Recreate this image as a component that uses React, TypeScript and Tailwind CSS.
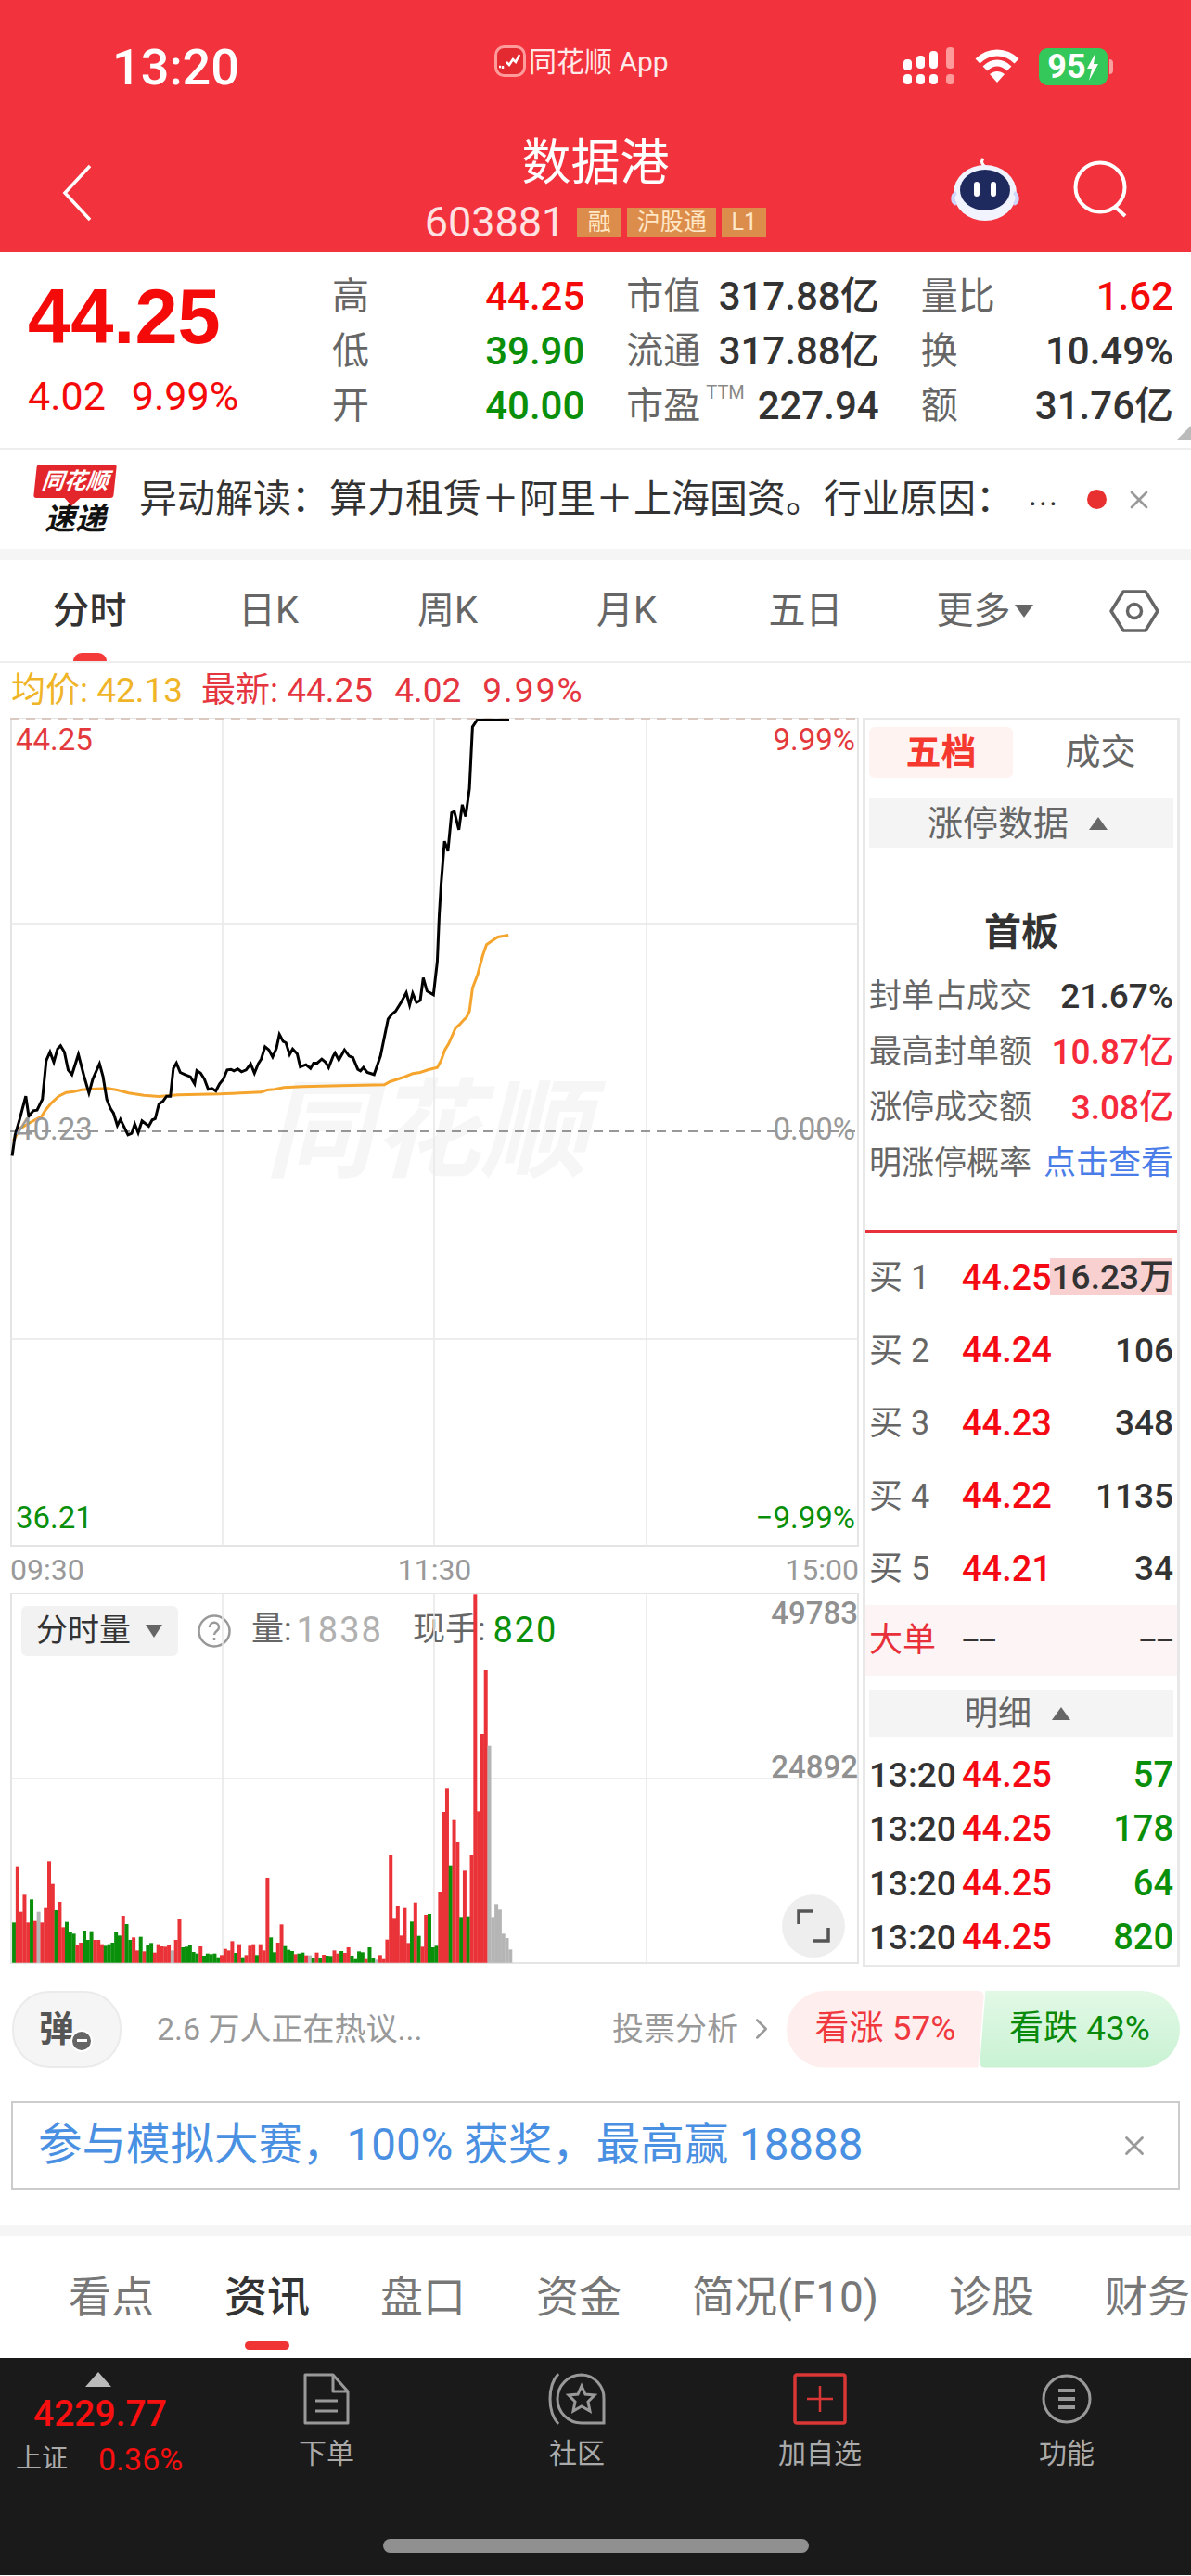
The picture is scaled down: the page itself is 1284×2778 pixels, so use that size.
import { ChevronRight, X } from "lucide-react"

// traced from the reference, in zoomed crop coordinates (2.45x wide, 3x tall)
const priceLine = "32,1458 40,1390 52,1340 68,1265 76,1330 88,1312 98,1310 112,1275 122,1150 132,1122 142,1155 152,1112 160,1102 170,1122 180,1180 190,1195 207,1130 222,1200 235,1255 245,1210 263,1160 272,1200 282,1275 292,1305 300,1320 310,1360 318,1340 338,1390 348,1385 356,1355 365,1383 375,1345 393,1362 402,1342 410,1338 420,1290 430,1282 440,1265 450,1265 458,1175 466,1158 476,1188 490,1196 503,1202 514,1225 520,1182 530,1190 540,1210 550,1243 560,1240 570,1248 580,1225 590,1210 600,1180 610,1178 618,1183 628,1177 638,1186 650,1180 662,1160 672,1190 682,1160 690,1145 700,1105 710,1115 720,1138 730,1110 738,1065 748,1088 755,1092 765,1130 773,1112 785,1128 793,1170 808,1163 820,1175 828,1158 838,1158 850,1145 860,1155 868,1172 880,1135 885,1125 895,1148 910,1115 922,1135 932,1140 945,1178 952,1183 960,1172 970,1188 988,1195 1005,1135 1025,1015 1035,1000 1045,990 1060,960 1073,930 1082,970 1090,932 1100,962 1110,955 1118,882 1128,925 1145,937 1155,830 1160,680 1165,580 1174,440 1183,472 1193,348 1200,344 1212,403 1221,322 1230,360 1240,270 1248,70 1260,48 1345,48"
const avgLine = "35,1410 52,1370 80,1350 110,1330 120,1310 135,1288 155,1265 175,1253 195,1250 215,1244 240,1242 285,1240 310,1245 340,1255 380,1262 420,1266 470,1261 580,1258 690,1252 705,1245 725,1243 750,1237 800,1234 900,1231 1015,1228 1030,1218 1065,1204 1090,1192 1110,1188 1130,1180 1155,1172 1165,1150 1175,1115 1185,1095 1203,1045 1215,1032 1225,1018 1232,1010 1240,990 1248,915 1262,870 1275,810 1285,775 1300,762 1315,750 1343,744"
const volBars = "g1240 r1058 r1205 r1150 r1240 g1165 r1235 y1205 r1240 r1193 r1042 r1115 g1200 r1173 r1255 g1238 g1272 g1276 r1312 r1305 g1266 g1296 g1268 r1296 r1296 r1310 g1315 g1310 g1305 g1270 g1282 r1218 g1245 g1296 r1288 r1330 g1286 r1333 g1312 g1306 r1337 r1310 r1317 r1318 r1313 y1330 r1296 r1230 g1320 g1318 g1312 g1335 g1340 r1317 g1347 g1340 g1342 g1340 g1352 r1345 r1325 r1330 r1300 g1338 r1310 g1352 r1345 r1315 r1310 g1345 r1310 r1330 r1095 g1288 g1336 r1305 r1246 g1316 g1328 g1332 r1342 g1340 g1337 r1346 y1346 g1355 r1337 g1355 r1344 g1347 g1348 r1330 r1340 g1332 r1338 r1320 g1347 g1358 g1333 g1336 r1358 g1320 g1353 y1360 r1345 r1358 r1295 r1022 r1225 r1188 r1282 r1193 r1306 g1237 r1175 g1283 r1318 r1215 g1212 g1320 g1315 r1140 r882 r805 g1055 r908 r978 g1222 r1072 g1220 r1020 r178 r880 r630 r423 y668 y1222 y1180 y1198 y1276 y1290 y1327".split(" ")
const barColor: Record<string, string> = { r: "#ea3338", g: "#0a8f0a", y: "#b5b5b5" }

const mapLine = (pts: string, offsetY: number) =>
    pts.split(" ").map((p) => {
        const [x, y] = p.split(",").map(Number)
        return `${(x / 2.45 - 11).toFixed(1)},${(y / 3 - offsetY).toFixed(1)}`
    }).join(" ")

const QuoteCell = ({ label, value, color }: { label: React.ReactNode; value: string; color: string }) => (
    <div className="flex items-center justify-between h-[59px]">
        <span className="text-[#666] text-[40px]">{label}</span>
        <span className={`text-[42px] font-medium ${color}`}>{value}</span>
    </div>
)

const BuyRow = ({ n, price, qty }: { n: number; price: string; qty: string }) => (
    <div className="flex items-center h-[78.5px]">
        <span className="w-[100px] text-[#666] text-[36px]">买 {n}</span>
        <span className="text-[#f50a14] text-[38px] font-medium">{price}</span>
        <span className="ml-auto text-[#333] text-[37px] font-medium whitespace-nowrap">{qty}</span>
    </div>
)

const TradeRow = ({ qty }: { qty: string }) => (
    <div className="flex items-center h-[58.5px]">
        <span className="w-[100px] text-[#333] text-[37px] font-medium">13:20</span>
        <span className="text-[#f50a14] text-[38px] font-medium">44.25</span>
        <span className="ml-auto text-[#0a8f0a] text-[38px] font-medium">{qty}</span>
    </div>
)

const NavItem = ({ x, label, children }: { x: string; label: string; children: React.ReactNode }) => (
    <div className={`flex flex-col items-center ${x}`}>
        <div className="h-[58px] flex items-center">{children}</div>
        <span className="mt-[10px] text-[#aaa] text-[30px] leading-[40px] whitespace-nowrap">{label}</span>
    </div>
)

export default function App() {
    return (
        <div className="w-[1284px] h-[2778px] bg-white overflow-hidden font-['Roboto','Noto_Sans_CJK_SC',sans-serif]">
            {/* red header */}
            <div className="h-[272px] bg-[#f2323c] text-white">
                <div className="h-[144px] flex items-center">
                    <div className="w-[533px] pl-[121px] text-[54px] font-medium">13:20</div>
                    <div className="flex items-center gap-[3px] -mt-[12px] text-[30px] text-[#ffe9e9]">
                        <svg width="34" height="34" viewBox="0 0 34 34">
                            <rect x="1.5" y="1.5" width="31" height="31" rx="9" fill="#e32a30" stroke="#ff9b9b" strokeWidth="3" />
                            <path d="M5 23h2M9 22v3M13 18l3 3 4-6 3 3 4-8" stroke="#fff" strokeWidth="2.5" fill="none" />
                        </svg>
                        <span>同花顺 App</span>
                    </div>
                    <div className="ml-auto pr-[84px] flex items-center">
                        <svg width="62" height="42" viewBox="0 0 62 42" className="mr-[17px]">
                            <g fill="#fff">
                                <rect x="2" y="13" width="9" height="12" rx="4" /><rect x="2" y="29" width="9" height="11" rx="4" />
                                <rect x="16" y="9" width="9" height="14" rx="4" /><rect x="16" y="29" width="9" height="11" rx="4" />
                                <rect x="30" y="4" width="9" height="19" rx="4" /><rect x="30" y="29" width="9" height="11" rx="4" />
                            </g>
                            <g fill="#ff9a9a">
                                <rect x="48" y="0" width="9" height="23" rx="4" /><rect x="48" y="29" width="9" height="11" rx="4" />
                            </g>
                        </svg>
                        <svg width="48" height="38" viewBox="0 0 48 38" className="mr-[21px]" fill="none" stroke="#fff" strokeWidth="7">
                            <path d="M3 13C15 1 33 1 45 13" />
                            <path d="M11 21C19 13 29 13 37 21" />
                            <path d="M24 36L16 27C21 23 27 23 32 27Z" fill="#fff" stroke="none" />
                        </svg>
                        <div className="w-[74px] h-[40px] rounded-[9px] bg-[#34c759] flex items-center justify-center text-[36px] font-bold">
                            95
                            <svg width="14" height="30" viewBox="0 0 14 30"><path d="M10 0L1 17h5L3 30l10-18H8z" fill="#fff" /></svg>
                        </div>
                        <div className="ml-[2px] w-[4px] h-[16px] rounded-r bg-[#f7a0a0]" />
                    </div>
                </div>
                <div className="h-[128px] grid grid-cols-[1fr_auto_1fr]">
                    <div className="flex items-center pl-[67px]">
                        <svg width="32" height="62" viewBox="0 0 32 62" fill="none" stroke="#fff" strokeWidth="3.5">
                            <path d="M30 2L3 31l27 29" />
                        </svg>
                    </div>
                    <div className="flex flex-col items-center pt-[3px]">
                        <div className="h-[58px] text-[53px] leading-[58px]">数据港</div>
                        <div className="mt-[11px] flex items-center h-[48px]">
                            <span className="text-[45px] text-[#ffe3e3] mr-[13px]">603881</span>
                            <span className="h-[32px] w-[48px] bg-[#dd8d4b] text-[#ffe7c7] text-[25px] flex items-center justify-center">融</span>
                            <span className="ml-[6px] h-[32px] w-[96px] bg-[#dd8d4b] text-[#ffe7c7] text-[25px] flex items-center justify-center">沪股通</span>
                            <span className="ml-[6px] h-[32px] w-[48px] bg-[#dd8d4b] text-[#ffe7c7] text-[25px] flex items-center justify-center">L1</span>
                        </div>
                    </div>
                    <div className="flex items-center justify-end pr-[67px] gap-[58px] -mt-[9px]">
                        <svg width="74" height="72" viewBox="0 0 74 72">
                            <path d="M37 12c-3-3-5-5-2-9" stroke="#fff" strokeWidth="3" fill="none" />
                            <ellipse cx="37" cy="40" rx="34" ry="30" fill="#f1f3ff" />
                            <ellipse cx="37" cy="37" rx="27" ry="22" fill="#1e2a5e" />
                            <rect x="25" y="28" width="6" height="16" rx="3" fill="#fff" />
                            <rect x="43" y="28" width="6" height="16" rx="3" fill="#fff" />
                            <path d="M6 40c-5 2-5 10 0 12M68 40c5 2 5 10 0 12" stroke="#cfd6ff" strokeWidth="4" fill="none" />
                        </svg>
                        <svg width="60" height="62" viewBox="0 0 60 62" fill="none" stroke="#fff" strokeWidth="4">
                            <circle cx="29" cy="29" r="26.5" />
                            <path d="M45 50l11 10" />
                        </svg>
                    </div>
                </div>
            </div>

            {/* quote panel */}
            <div className="relative h-[213px] flex pt-[18px] border-b-[2px] border-[#eee]">
                <div className="w-[358px] pl-[30px]">
                    <div className="h-[105px] flex items-center text-[83px] font-bold text-[#f50a0a] font-['Liberation_Sans',sans-serif]">44.25</div>
                    <div className="mt-[7px] flex gap-[28px] text-[#f50a0a] text-[43px] h-[50px] items-center">
                        <span>4.02</span>
                        <span>9.99%</span>
                    </div>
                </div>
                <div className="w-[907px] grid grid-cols-3 gap-x-[45px] content-start">
                    <QuoteCell label="高" value="44.25" color="text-[#f50a0a]" />
                    <QuoteCell label="市值" value="317.88亿" color="text-[#333]" />
                    <QuoteCell label="量比" value="1.62" color="text-[#f50a0a]" />
                    <QuoteCell label="低" value="39.90" color="text-[#0a8f0a]" />
                    <QuoteCell label="流通" value="317.88亿" color="text-[#333]" />
                    <QuoteCell label="换" value="10.49%" color="text-[#333]" />
                    <QuoteCell label="开" value="40.00" color="text-[#0a8f0a]" />
                    <QuoteCell
                        label={<>市盈<span className="align-top text-[20px] text-[#888] ml-[6px]">TTM</span></>}
                        value="227.94"
                        color="text-[#333]"
                    />
                    <QuoteCell label="额" value="31.76亿" color="text-[#333]" />
                </div>
                <svg width="16" height="16" viewBox="0 0 16 16" className="absolute right-0 bottom-[8px]">
                    <path d="M16 0V16H0Z" fill="#bbb" />
                </svg>
            </div>

            {/* alert strip */}
            <div className="h-[107px] flex items-center pl-[37px]">
                <div className="w-[88px] flex flex-col items-center">
                    <div className="relative w-[86px] h-[36px] bg-[#e3262b] -skew-x-6 rounded-[3px] flex items-center justify-center text-white text-[24px] font-bold italic leading-none">
                        同花顺
                        <div className="absolute left-[36px] -bottom-[6px] w-[12px] h-[12px] bg-[#e3262b] rotate-45" />
                    </div>
                    <div className="mt-[6px] text-[#111] text-[33px] font-bold italic leading-[34px]">速递</div>
                </div>
                <div className="ml-[25px] text-[#333] text-[41px] whitespace-nowrap">异动解读：算力租赁＋阿里＋上海国资。行业原因：</div>
                <div className="ml-[16px] text-[#333] text-[34px] -mt-[10px] tracking-[2px]">...</div>
                <div className="ml-[30px] w-[21px] h-[21px] rounded-full bg-[#e83030]" />
                <X className="ml-[19px] text-[#999]" size={32} strokeWidth={2} />
            </div>
            <div className="h-[12px] bg-[#f5f5f5]" />

            {/* period tabs */}
            <div className="relative h-[111px] flex items-center border-b-[2px] border-[#eee] text-[40px] text-[#666]">
                <div className="w-[193px] text-center font-medium text-[#333]">分时</div>
                <div className="w-[193px] text-center">日K</div>
                <div className="w-[193px] text-center">周K</div>
                <div className="w-[193px] text-center">月K</div>
                <div className="w-[193px] text-center">五日</div>
                <div className="w-[193px] flex justify-center items-center gap-[4px]">
                    更多
                    <svg width="20" height="14" viewBox="0 0 20 14"><path d="M0 0h20L10 14z" fill="#666" /></svg>
                </div>
                <svg width="54" height="48" viewBox="0 0 54 48" fill="none" stroke="#666" strokeWidth="3.5" className="ml-[38px]">
                    <path d="M15 3h24l13 21-13 21H15L2 24z" strokeLinejoin="round" />
                    <circle cx="27" cy="24" r="7.5" />
                </svg>
                <div className="absolute left-[79px] bottom-0 w-[36px] h-[9px] rounded-t-full bg-[#f53a3a]" />
            </div>

            {/* average / latest */}
            <div className="h-[60px] flex items-center pl-[12px] gap-[23px] text-[37px] text-[#e5353f] whitespace-nowrap -mb-[1px]">
                <span className="text-[#f0b429] mr-[-3px]">均价: 42.13</span>
                <span>最新: 44.25</span>
                <span>4.02</span>
                <span className="tracking-[2px]">9.99%</span>
            </div>

            <div className="flex pl-[11px]">
                {/* charts */}
                <div className="w-[915px]">
                    <div className="relative h-[894px]">
                        <div className="absolute left-[275px] top-[388px] text-[#f6f6f6] text-[116px] font-bold italic leading-none whitespace-nowrap">同花顺</div>
                        <svg width="915" height="894" viewBox="0 0 915 894" className="absolute inset-0" fill="none">
                            <rect x="1" y="0" width="913" height="893" stroke="#e4e4e4" strokeWidth="2" />
                            <path d="M229 0V893M457 0V893M686 0V893M0 222H915M0 670H915" stroke="#e8e8e8" strokeWidth="1.5" />
                            <path d="M0 1H915" stroke="#d9c9c0" strokeWidth="2" strokeDasharray="10 7" />
                            <path d="M0 446H915" stroke="#777" strokeWidth="1.5" strokeDasharray="10 7" />
                            <polyline points={mapLine(avgLine, 13.5)} stroke="#f5a52d" strokeWidth="3" />
                            <polyline points={mapLine(priceLine, 13.5)} stroke="#000" strokeWidth="3" />
                        </svg>
                        <span className="absolute left-[6px] -top-[1px] text-[33px] text-[#e4393c]">44.25</span>
                        <span className="absolute right-[4px] -top-[1px] text-[33px] text-[#e4393c]">9.99%</span>
                        <span className="absolute left-[6px] top-[419px] text-[33px] text-[#999]">40.23</span>
                        <span className="absolute right-[4px] top-[419px] text-[33px] text-[#999]">0.00%</span>
                        <span className="absolute left-[6px] top-[838px] text-[33px] text-[#0a8f0a]">36.21</span>
                        <span className="absolute right-[4px] top-[838px] text-[33px] text-[#0a8f0a]">−9.99%</span>
                    </div>
                    <div className="h-[50px] flex items-center justify-between text-[32px] text-[#999]">
                        <span>09:30</span>
                        <span>11:30</span>
                        <span>15:00</span>
                    </div>
                    <div className="relative h-[400px]">
                        <div className="pt-[12px] pl-[12px] flex items-center">
                            <div className="w-[169px] h-[54px] bg-[#f2f2f2] rounded-[6px] flex items-center pl-[16px] text-[#333] text-[34px]">
                                分时量
                                <svg width="18" height="14" viewBox="0 0 18 14" className="ml-[16px]"><path d="M0 0h18L9 14z" fill="#666" /></svg>
                            </div>
                            <svg width="36" height="36" viewBox="0 0 36 36" className="ml-[21px]" fill="none" stroke="#999" strokeWidth="2.5">
                                <circle cx="18" cy="18" r="16.5" />
                                <path d="M13 14c0-7 10-7 10 0 0 4-5 4-5 8M18 25v3" />
                            </svg>
                            <span className="ml-[22px] text-[#666] text-[35px]">量:</span>
                            <span className="ml-[5px] text-[#b0b0b0] text-[38px] tracking-[2px]">1838</span>
                            <span className="ml-[32px] text-[#666] text-[35px]">现手:</span>
                            <span className="ml-[8px] text-[#0a8f0a] text-[38px] tracking-[2px]">820</span>
                        </div>
                        <svg width="915" height="400" viewBox="0 0 915 400" className="absolute inset-0" fill="none">
                            <rect x="1" y="0" width="913" height="399" stroke="#e4e4e4" strokeWidth="2" />
                            <path d="M229 0V399M457 0V399M686 0V399M0 200H915" stroke="#e8e8e8" strokeWidth="1.5" />
                            {volBars.map((b, i) => {
                                const top = Number(b.slice(1)) / 3 - 58
                                return (
                                    <rect key={i} x={(32 + i * 9.3) / 2.45 - 11} y={top} width="4" height={398.7 - top} fill={barColor[b[0]]} />
                                )
                            })}
                        </svg>
                        <span className="absolute right-[1px] -top-[3px] text-[33px] text-[#909090] font-medium">49783</span>
                        <span className="absolute right-[1px] top-[163px] text-[33px] text-[#909090] font-medium">24892</span>
                        <div className="absolute left-[832px] top-[325px] w-[68px] h-[68px] rounded-full bg-[#eeeeee] flex items-center justify-center">
                            <svg width="36" height="36" viewBox="0 0 36 36" fill="none" stroke="#555" strokeWidth="3.5">
                                <path d="M2 16V2h16M34 20v14H18" />
                            </svg>
                        </div>
                    </div>
                </div>

                {/* order book */}
                <div className="ml-[4px] w-[342px] h-[1347px] border-x-[3px] border-y-[2px] border-[#e8e8e8] flex flex-col">
                    <div className="px-[4px]">
                        <div className="mt-[8px] flex h-[55px]">
                            <div className="w-[155px] rounded-[6px] bg-[#fff3f2] flex items-center justify-center text-[#f5392f] text-[38px] font-bold">五档</div>
                            <div className="flex-1 flex items-center justify-center pl-[16px] text-[#666] text-[38px]">成交</div>
                        </div>
                        <div className="mt-[22px] h-[54px] bg-[#f4f4f4] flex items-center justify-center text-[#666] text-[38px]">
                            <span className="-ml-[8px]">涨停数据</span>
                            <svg width="20" height="14" viewBox="0 0 20 14" className="ml-[22px]"><path d="M10 0l10 14H0z" fill="#666" /></svg>
                        </div>
                        <div className="mt-[67px] h-[48px] flex items-center justify-center text-[#333] text-[40px] font-bold">首板</div>
                        <div className="mt-[15px]">
                            <div className="flex items-center justify-between h-[60px] text-[35px]">
                                <span className="text-[#666]">封单占成交</span>
                                <span className="text-[#333] text-[37px] font-medium">21.67%</span>
                            </div>
                            <div className="flex items-center justify-between h-[60px] text-[35px]">
                                <span className="text-[#666]">最高封单额</span>
                                <span className="text-[#f52a3a] text-[37px] font-medium">10.87亿</span>
                            </div>
                            <div className="flex items-center justify-between h-[60px] text-[35px]">
                                <span className="text-[#666]">涨停成交额</span>
                                <span className="text-[#f52a3a] text-[37px] font-medium">3.08亿</span>
                            </div>
                            <div className="flex items-center justify-between h-[60px] text-[35px]">
                                <span className="text-[#666]">明涨停概率</span>
                                <span className="text-[#4a7de8]">点击查看</span>
                            </div>
                        </div>
                    </div>
                    <div className="mt-[41px] h-[4px] bg-[#e8303a]" />
                    <div className="mt-[9px] px-[4px]">
                        <div className="relative">
                            <div className="absolute right-[2px] top-[18px] w-[131px] h-[40px] bg-[#f8d0d0]" />
                            <div className="relative"><BuyRow n={1} price="44.25" qty="16.23万" /></div>
                        </div>
                        <BuyRow n={2} price="44.24" qty="106" />
                        <BuyRow n={3} price="44.23" qty="348" />
                        <BuyRow n={4} price="44.22" qty="1135" />
                        <BuyRow n={5} price="44.21" qty="34" />
                    </div>
                    <div className="h-[76px] bg-[#fdf5f5] px-[4px] flex items-center">
                        <span className="w-[100px] text-[#e8303a] text-[36px]">大单</span>
                        <span className="text-[#333] text-[24px] font-medium">——</span>
                        <span className="ml-auto text-[#333] text-[24px] font-medium">——</span>
                    </div>
                    <div className="px-[4px]">
                        <div className="mt-[16px] h-[50px] bg-[#f4f4f4] flex items-center justify-center text-[#666] text-[36px]">
                            <span className="-ml-[8px]">明细</span>
                            <svg width="20" height="14" viewBox="0 0 20 14" className="ml-[22px]"><path d="M10 0l10 14H0z" fill="#666" /></svg>
                        </div>
                        <div className="mt-[12px]">
                            <TradeRow qty="57" />
                            <TradeRow qty="178" />
                            <TradeRow qty="64" />
                            <TradeRow qty="820" />
                        </div>
                    </div>
                </div>
            </div>

            {/* vote row */}
            <div className="mt-[25px] flex items-center pl-[13px] h-[84px]">
                <div className="relative w-[118px] h-[83px] rounded-[40px] bg-[#f5f5f5] border-2 border-[#ebebeb] flex items-center justify-center pr-[22px] text-[#555] text-[38px] font-bold">
                    弹
                    <div className="absolute left-[61px] top-[40px] w-[24px] h-[24px] rounded-full bg-[#666] border-2 border-white flex items-center justify-center">
                        <div className="w-[11px] h-[3px] bg-white" />
                    </div>
                </div>
                <span className="ml-[38px] text-[#999] text-[34px]">2.6 万人正在热议...</span>
                <span className="ml-auto text-[#999] text-[34px]">投票分析</span>
                <ChevronRight className="ml-[6px] text-[#999]" size={38} strokeWidth={1.6} />
                <div className="ml-[8px] flex h-[83px] pr-[12px]">
                    <div className="w-[213px] rounded-l-[42px] rounded-r-[6px] bg-[#ffeeee] [clip-path:polygon(0_0,100%_0,97%_100%,0_100%)] flex items-center justify-center text-[#f0383f] text-[37px]">看涨 57%</div>
                    <div className="-ml-[5px] w-[216px] rounded-r-[42px] rounded-l-[6px] bg-gradient-to-b from-[#e2f9e6] to-[#c9f2d3] [clip-path:polygon(3%_0,100%_0,100%_100%,0_100%)] flex items-center justify-center text-[#0a8a0a] text-[37px]">看跌 43%</div>
                </div>
            </div>

            {/* promo */}
            <div className="mt-[36px] mx-[12px] h-[96px] border-2 border-[#ccc] flex items-center pl-[27px] pr-[30px]">
                <span className="text-[#4a90e2] text-[47.5px] whitespace-nowrap">参与模拟大赛，100% 获奖，最高赢 18888</span>
                <X className="ml-auto text-[#999]" size={34} strokeWidth={2} />
            </div>
            <div className="mt-[37px] h-[12px] bg-[#f5f5f5]" />

            {/* content tabs */}
            <div className="relative h-[132px] flex items-center gap-[76px] pl-[74px] overflow-hidden text-[#777] text-[46px] whitespace-nowrap">
                <span>看点</span>
                <span className="font-medium text-[#333]">资讯</span>
                <span>盘口</span>
                <span>资金</span>
                <span>简况(F10)</span>
                <span>诊股</span>
                <span>财务</span>
                <div className="absolute left-[264px] top-[114px] w-[48px] h-[9px] rounded-full bg-[#f03434]" />
            </div>

            {/* bottom bar */}
            <div className="relative h-[234px] bg-[#1a1a1a] flex">
                <div className="w-[225px] pl-[17px] pt-[15px]">
                    <svg width="28" height="16" viewBox="0 0 28 16" className="ml-[75px]"><path d="M14 0l14 16H0z" fill="#bbb" /></svg>
                    <div className="ml-[19px] mt-[6px] text-[#f80f0f] text-[39px] font-medium leading-[46px]">4229.77</div>
                    <div className="mt-[4px] flex items-center h-[44px]">
                        <span className="text-[#aaa] text-[28px]">上证</span>
                        <span className="ml-[33px] text-[#f80f0f] text-[34px]">0.36%</span>
                    </div>
                </div>
                <NavItem x="ml-[97px] mt-[15px] w-[60px]" label="下单">
                    <svg width="52" height="58" viewBox="0 0 52 58" fill="none" stroke="#999" strokeWidth="3">
                        <path d="M3 3h30l16 18v34H3zM33 3v18h16" strokeLinejoin="round" />
                        <path d="M14 31h24M14 42h24" />
                    </svg>
                </NavItem>
                <NavItem x="ml-[210px] mt-[15px] w-[60px]" label="社区">
                    <svg width="62" height="58" viewBox="0 0 62 58" fill="none" stroke="#999" strokeWidth="3">
                        <path d="M11 2C-1 15-1 43 11 56" />
                        <path d="M36 3a26 26 0 1 0 0 52h24V29A25 25 0 0 0 36 3z" />
                        <path d="M36 15l4 9 10 1-7 7 2 10-9-5-9 5 2-10-7-7 10-1z" />
                    </svg>
                </NavItem>
                <NavItem x="ml-[202px] mt-[15px] w-[60px]" label="加自选">
                    <svg width="58" height="56" viewBox="0 0 58 56" fill="none" stroke="#d93636" strokeWidth="3.5">
                        <rect x="2" y="2" width="54" height="52" rx="2" />
                        <path d="M29 14v28M15 28h28" strokeWidth="2.5" />
                    </svg>
                </NavItem>
                <NavItem x="ml-[206px] mt-[15px] w-[60px]" label="功能">
                    <svg width="54" height="54" viewBox="0 0 54 54" fill="none" stroke="#999" strokeWidth="3">
                        <circle cx="27" cy="27" r="25" />
                        <path d="M18 18h18M18 27h18M18 36h18" strokeWidth="4" />
                    </svg>
                </NavItem>
                <div className="absolute left-[413px] top-[195px] w-[459px] h-[15px] rounded-full bg-[#909090]" />
            </div>
        </div>
    )
}
